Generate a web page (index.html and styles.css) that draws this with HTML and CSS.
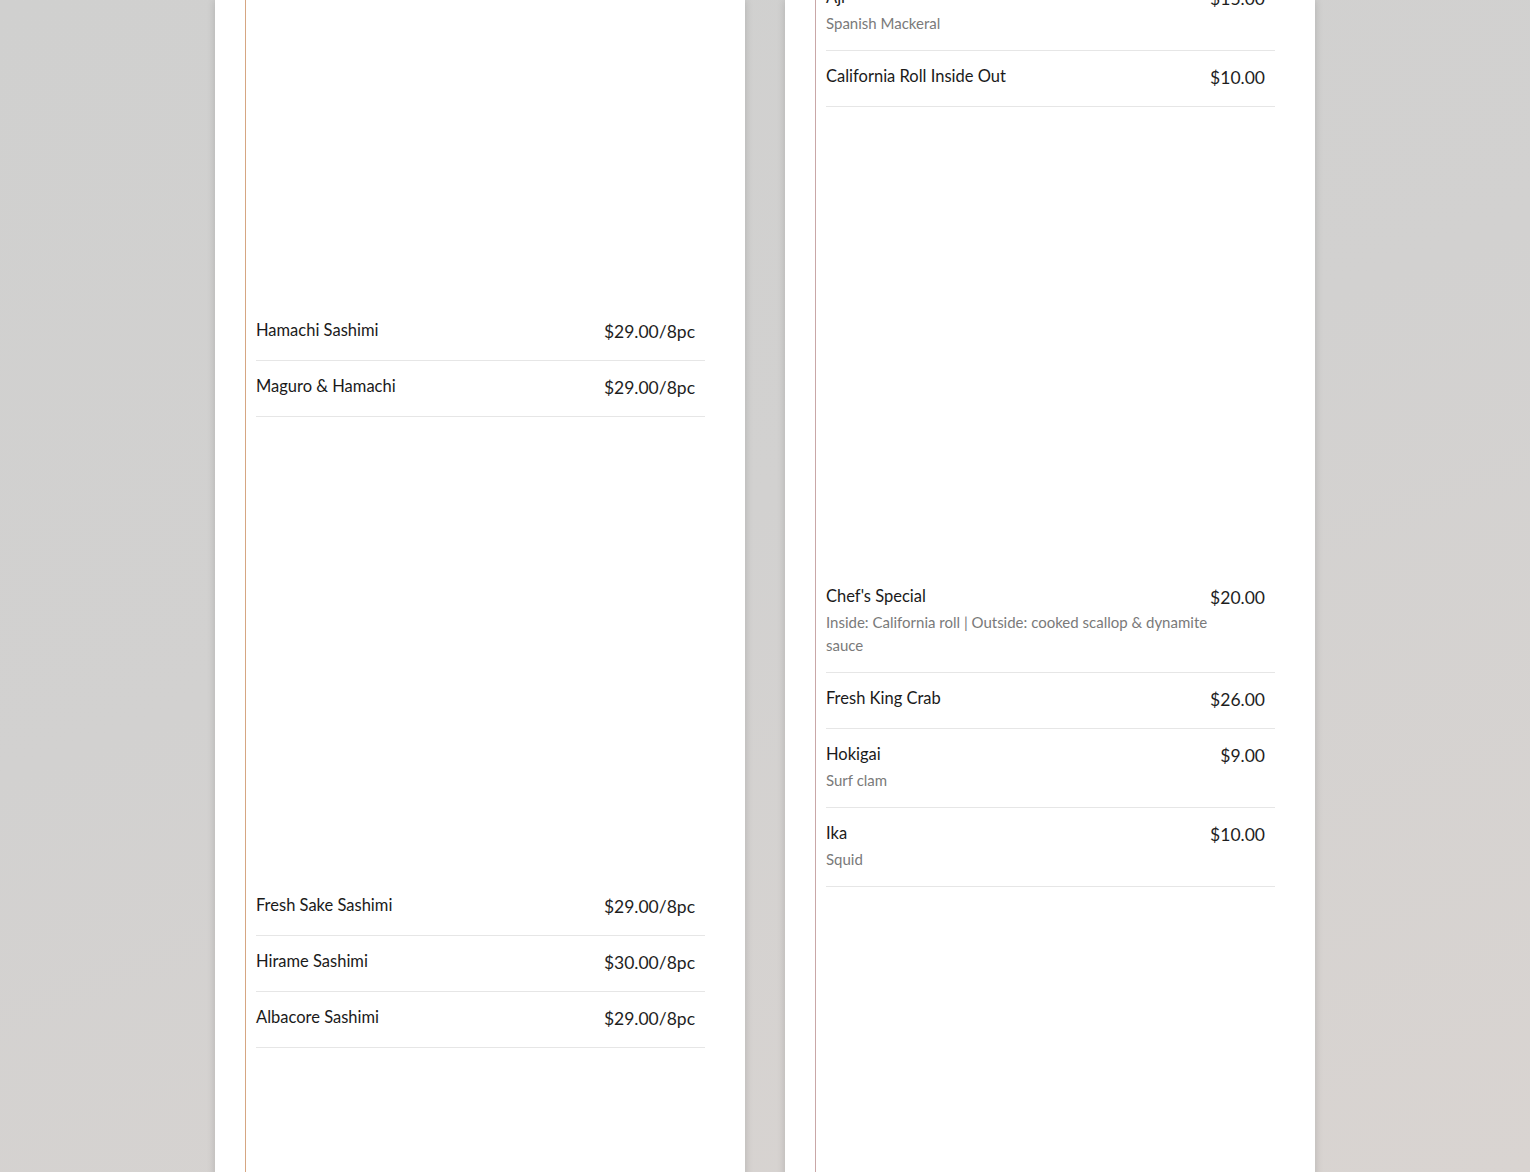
FILE: index.html
```html
<!DOCTYPE html>
<html lang="en">
<head>
<meta charset="utf-8">
<title>Menu</title>
<link rel="stylesheet" href="styles.css">
</head>
<body>
<div class="page">
  <section class="card card-left">
    <div class="inner">
      <div class="spacer spacer-top"></div>
      <ul class="items">
        <li class="item"><div class="head"><div class="name">Hamachi Sashimi</div><div class="price">$29.00/8pc</div></div></li>
        <li class="item"><div class="head"><div class="name">Maguro &amp; Hamachi</div><div class="price">$29.00/8pc</div></div></li>
      </ul>
      <div class="spacer spacer-gap-left"></div>
      <ul class="items">
        <li class="item"><div class="head"><div class="name">Fresh Sake Sashimi</div><div class="price">$29.00/8pc</div></div></li>
        <li class="item"><div class="head"><div class="name">Hirame Sashimi</div><div class="price">$30.00/8pc</div></div></li>
        <li class="item"><div class="head"><div class="name">Albacore Sashimi</div><div class="price">$29.00/8pc</div></div></li>
      </ul>
      <div class="spacer spacer-bottom"></div>
    </div>
  </section>
  <section class="card card-right">
    <div class="inner">
      <ul class="items items-first">
        <li class="item"><div class="head"><div class="name">Aji</div><div class="price">$15.00</div></div><div class="desc">Spanish Mackeral</div></li>
        <li class="item"><div class="head"><div class="name">California Roll Inside Out</div><div class="price">$10.00</div></div></li>
      </ul>
      <div class="spacer spacer-gap-right"></div>
      <ul class="items">
        <li class="item"><div class="head"><div class="name">Chef's Special</div><div class="price">$20.00</div></div><div class="desc">Inside: California roll | Outside: cooked scallop &amp; dynamite sauce</div></li>
        <li class="item"><div class="head"><div class="name">Fresh King Crab</div><div class="price">$26.00</div></div></li>
        <li class="item"><div class="head"><div class="name">Hokigai</div><div class="price">$9.00</div></div><div class="desc">Surf clam</div></li>
        <li class="item"><div class="head"><div class="name">Ika</div><div class="price">$10.00</div></div><div class="desc">Squid</div></li>
      </ul>
      <div class="spacer spacer-bottom"></div>
    </div>
  </section>
</div>
</body>
</html>
```
FILE: styles.css
```css
html, body {
  margin: 0;
  padding: 0;
  height: 100%;
  overflow: hidden;
}
body {
  background: linear-gradient(160deg, #d0d0cf 0%, #d2d1d0 45%, #d9d4d1 100%);
  font-family: Lato, "Liberation Sans", sans-serif;
  color: #1b1b1b;
}
.page {
  display: flex;
  justify-content: center;
  gap: 40px;
  align-items: flex-start;
}
.card {
  width: 530px;
  box-sizing: border-box;
  background: #fff;
  padding: 0 40px 0 30px;
  box-shadow: 0 0 8px rgba(0, 0, 0, 0.16);
  min-height: 1300px;
}
.inner {
  border-left: 1px solid #d6a682;
  padding-left: 10px;
  min-height: 1300px;
}
.card-right .inner {
  border-left-color: #c9a7a7;
}
.spacer-top { height: 305px; }
.spacer-gap-left { height: 463px; }
.spacer-gap-right { height: 464px; }
.spacer-bottom { height: 200px; }
.items {
  list-style: none;
  margin: 0;
  padding: 0;
}
.items-first {
  margin-top: -28px;
}
.item {
  padding: 12px 10px 15px 0;
  border-bottom: 1px solid #e6e6e6;
}
.head {
  display: flex;
  align-items: flex-start;
  justify-content: space-between;
  gap: 12px;
}
.name {
  font-size: 16.5px;
  line-height: 26px;
  color: #1a1a1a;
}
.desc {
  margin-top: 0;
  padding-right: 36px;
  font-size: 15px;
  line-height: 23px;
  color: #7a7a7a;
}
.price {
  font-size: 17.5px;
  line-height: 27px;
  color: #1e1e1e;
  white-space: nowrap;
  padding-top: 1px;
}
```
